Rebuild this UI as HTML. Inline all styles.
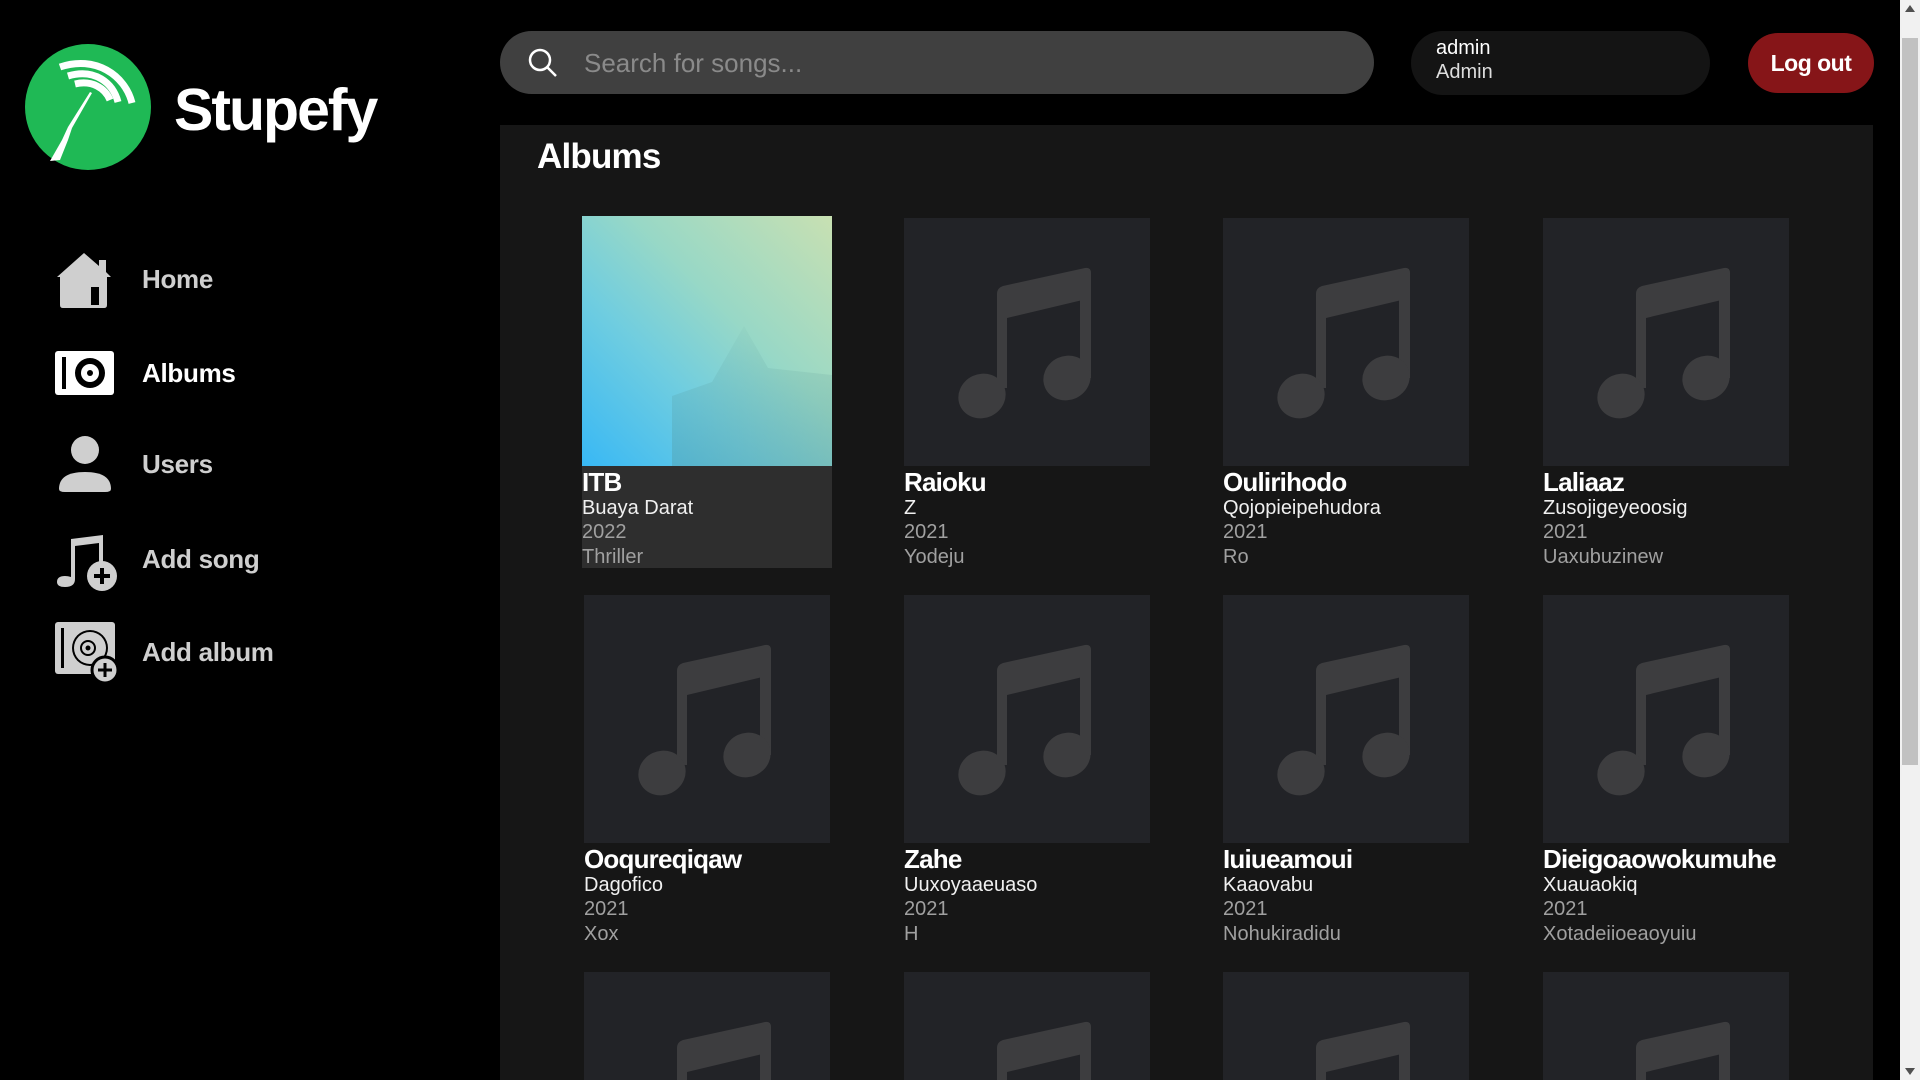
<!DOCTYPE html>
<html><head><meta charset="utf-8"><style>
*{margin:0;padding:0;box-sizing:border-box}
html,body{width:1920px;height:1080px;overflow:hidden;background:#000;font-family:"Liberation Sans",sans-serif;color:#fff}
#w{position:relative;width:1920px;height:1080px;overflow:hidden}
.abs{position:absolute}
.nav{position:absolute;left:55px;display:flex;align-items:center}
.nav span{position:absolute;left:87px;font-size:26px;font-weight:bold;color:#cfcfcf;white-space:nowrap;letter-spacing:-0.3px}
.card{position:absolute;width:250px}
.img{width:246px;height:248px;background:#222327;position:relative}
.t{font-size:26px;font-weight:bold;line-height:28px;margin-top:2px;letter-spacing:-0.8px;white-space:nowrap}
.a{font-size:20px;line-height:24px;color:#f0f0f0;white-space:nowrap}
.y{font-size:20px;line-height:25px;color:#a0a0a0;white-space:nowrap}
</style></head><body><div id="w">
<svg class="abs" style="left:0;top:0" width="200" height="190">
<circle cx="88" cy="107" r="63" fill="#1fb955"/>
<g fill="none" stroke="#fff" stroke-width="7">
<path d="M60 67 C95 55 125 75 132 103"/>
<path d="M68 76 C95 68 113 83 118 102"/>
<path d="M75 84 C92 80 105 88 110 100"/>
</g>
<path d="M90 92 L92 93 L72 128 L68 140 L60 160 L50 161 L62 140 L68 127Z" fill="#fff"/>
</svg>
<div class="abs" style="left:174px;top:76px;font-size:59px;font-weight:bold;letter-spacing:-2px">Stupefy</div>

<div class="nav" style="top:249px"><svg width="60" height="60" viewBox="0 0 60 60"><path d="M2 28 L29 4 L44 17 L44 11 L51 11 L51 23 L56 28 L52 28 L52 56 Q52 59 49 59 L8 59 Q5 59 5 56 L5 28Z" fill="#cfcfcf"/><rect x="36" y="38" width="8" height="18" fill="#000"/></svg><span>Home</span></div>
<div class="nav" style="top:343px"><svg width="60" height="60" viewBox="0 0 60 60"><rect x="0" y="8" width="59" height="44" rx="3" fill="#fff"/><rect x="7" y="14" width="4" height="32" fill="#000"/><circle cx="35" cy="30" r="15" fill="#000"/><circle cx="35" cy="30" r="9" fill="#fff"/><circle cx="35" cy="30" r="3" fill="#000"/></svg><span style="color:#fff">Albums</span></div>
<div class="nav" style="top:434px"><svg width="60" height="60" viewBox="0 0 60 60"><circle cx="30" cy="16" r="14" fill="#cfcfcf"/><path d="M4 55 Q4 38 30 38 Q56 38 56 55 Q56 58 50 58 L10 58 Q4 58 4 55Z" fill="#cfcfcf"/></svg><span>Users</span></div>
<div class="nav" style="top:527px"><svg width="64" height="64" viewBox="0 0 64 64"><path d="M16 12 L48 8 L48 42 L44 42 L44 16 L20 19 L20 52 Q20 60 10 60 Q2 60 2 55 Q2 49 10 49 Q13 49 16 50Z" fill="#cfcfcf"/><circle cx="47" cy="49" r="15" fill="#cfcfcf"/><path d="M47 41 V57 M39 49 H55" stroke="#000" stroke-width="4"/></svg><span>Add song</span></div>
<div class="nav" style="top:620px"><svg width="64" height="64" viewBox="0 0 64 64"><rect x="0" y="2" width="60" height="52" rx="3" fill="#cfcfcf"/><rect x="6" y="8" width="3" height="40" fill="#000"/><circle cx="35" cy="28" r="18" fill="#000"/><circle cx="35" cy="28" r="16" fill="#cfcfcf"/><circle cx="33" cy="28" r="7" fill="none" stroke="#000" stroke-width="2"/><circle cx="33" cy="28" r="2.5" fill="#000"/><circle cx="50" cy="50" r="13" fill="#cfcfcf" stroke="#000" stroke-width="3"/><path d="M50 43 V57 M43 50 H57" stroke="#000" stroke-width="3"/></svg><span>Add album</span></div>

<div class="abs" style="left:500px;top:31px;width:874px;height:63px;border-radius:32px;background:#404040"></div>
<svg class="abs" style="left:527px;top:47px" width="32" height="32" viewBox="0 0 32 32"><circle cx="13" cy="13" r="10" fill="none" stroke="#fff" stroke-width="2.5"/><path d="M20.5 20.5 L29 29" stroke="#fff" stroke-width="2.5"/></svg>
<div class="abs" style="left:584px;top:48px;font-size:26px;color:#8a8a8a">Search for songs...</div>
<div class="abs" style="left:1411px;top:31px;width:299px;height:64px;border-radius:32px;background:#141414"></div>
<div class="abs" style="left:1436px;top:36px;font-size:20px;line-height:24px;color:#fff">admin<br><span style="color:#ddd">Admin</span></div>
<div class="abs" style="left:1748px;top:33px;width:126px;height:60px;border-radius:30px;background:#861518;font-size:23px;font-weight:bold;text-align:center;line-height:60px;letter-spacing:-0.5px">Log out</div>

<div class="abs" style="left:500px;top:125px;width:1373px;height:955px;background:#161616"></div>
<div class="abs" style="left:537px;top:137px;font-size:35px;font-weight:bold;letter-spacing:-0.8px">Albums</div>

<svg width="0" height="0" style="position:absolute"><defs><g id="n" fill="#3d3d3f"><path d="M93 76 Q93 70 99 68 L181 50 Q187 49 187 55 L187 80 L103 100 L103 170 L93 170Z"/><rect x="176" y="55" width="11" height="105"/><ellipse cx="78" cy="178" rx="24" ry="22" transform="rotate(-25 78 178)"/><ellipse cx="163" cy="160" rx="24" ry="22" transform="rotate(-25 163 160)"/></g></defs></svg>

<div class="card" style="left:582px;top:216px;background:#2e2e2e;height:352px">
<div style="width:250px;height:250px;background:linear-gradient(to top right,#38b8f5 0%,#6fcde0 35%,#98d8c6 60%,#c8e0b2 100%);position:relative;overflow:hidden"><div style="position:absolute;left:90px;top:110px;width:160px;height:140px;background:linear-gradient(to bottom,rgba(80,140,140,0.05),rgba(80,140,140,0.3));clip-path:polygon(0 50%,25% 40%,45% 0,60% 30%,100% 35%,100% 100%,0 100%)"></div></div>
<div class="t">ITB</div><div class="a">Buaya Darat</div><div class="y">2022</div><div class="y">Thriller</div></div>

<div class="card" style="left:904px;top:218px"><div class="img"><svg width="246" height="248"><use href="#n"/></svg></div><div class="t">Raioku</div><div class="a">Z</div><div class="y">2021</div><div class="y">Yodeju</div></div>
<div class="card" style="left:1223px;top:218px"><div class="img"><svg width="246" height="248"><use href="#n"/></svg></div><div class="t">Oulirihodo</div><div class="a">Qojopieipehudora</div><div class="y">2021</div><div class="y">Ro</div></div>
<div class="card" style="left:1543px;top:218px"><div class="img"><svg width="246" height="248"><use href="#n"/></svg></div><div class="t">Laliaaz</div><div class="a">Zusojigeyeoosig</div><div class="y">2021</div><div class="y">Uaxubuzinew</div></div>

<div class="card" style="left:584px;top:595px"><div class="img"><svg width="246" height="248"><use href="#n"/></svg></div><div class="t">Ooqureqiqaw</div><div class="a">Dagofico</div><div class="y">2021</div><div class="y">Xox</div></div>
<div class="card" style="left:904px;top:595px"><div class="img"><svg width="246" height="248"><use href="#n"/></svg></div><div class="t">Zahe</div><div class="a">Uuxoyaaeuaso</div><div class="y">2021</div><div class="y">H</div></div>
<div class="card" style="left:1223px;top:595px"><div class="img"><svg width="246" height="248"><use href="#n"/></svg></div><div class="t">Iuiueamoui</div><div class="a">Kaaovabu</div><div class="y">2021</div><div class="y">Nohukiradidu</div></div>
<div class="card" style="left:1543px;top:595px"><div class="img"><svg width="246" height="248"><use href="#n"/></svg></div><div class="t">Dieigoaowokumuhe</div><div class="a">Xuauaokiq</div><div class="y">2021</div><div class="y">Xotadeiioeaoyuiu</div></div>

<div style="position:absolute;left:584px;top:972px;width:246px;height:108px;background:#222327;overflow:hidden"><svg width="246" height="108"><use href="#n"/></svg></div>
<div style="position:absolute;left:904px;top:972px;width:246px;height:108px;background:#222327;overflow:hidden"><svg width="246" height="108"><use href="#n"/></svg></div>
<div style="position:absolute;left:1223px;top:972px;width:246px;height:108px;background:#222327;overflow:hidden"><svg width="246" height="108"><use href="#n"/></svg></div>
<div style="position:absolute;left:1543px;top:972px;width:246px;height:108px;background:#222327;overflow:hidden"><svg width="246" height="108"><use href="#n"/></svg></div>

<div class="abs" style="left:1900px;top:0;width:20px;height:1080px;background:#f1f1f1"></div>
<div class="abs" style="left:1902px;top:38px;width:16px;height:727px;background:#c1c1c1"></div>
<div class="abs" style="left:1905px;top:5px;width:0;height:0;border-left:5px solid transparent;border-right:5px solid transparent;border-bottom:7px solid #505050"></div>
<div class="abs" style="left:1905px;top:1068px;width:0;height:0;border-left:5px solid transparent;border-right:5px solid transparent;border-top:7px solid #505050"></div>
</div></body></html>
